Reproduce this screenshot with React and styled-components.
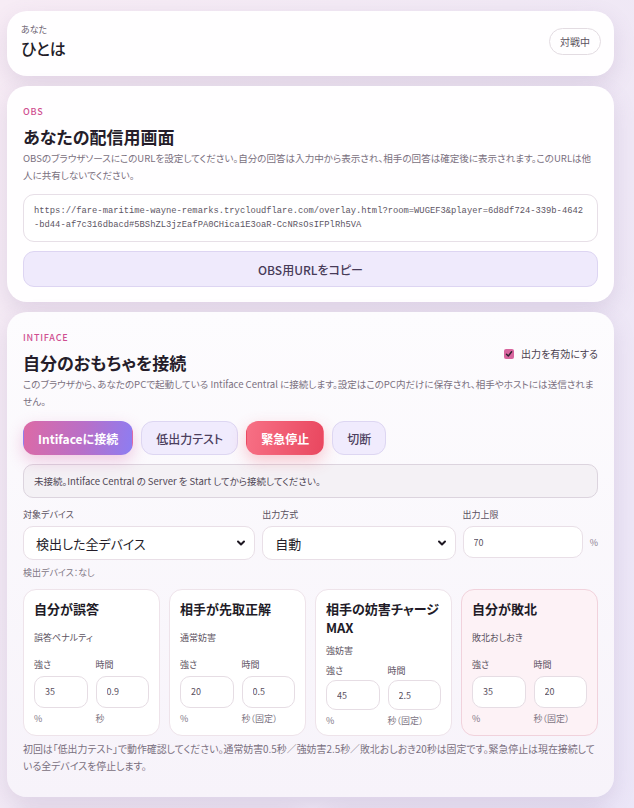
import React from "react";
import styled, { createGlobalStyle, css } from "styled-components";

const GlobalStyle = createGlobalStyle`
    html, body {
        margin: 0;
        min-height: 100%;
    }
    body {
        background: linear-gradient(120deg, #f7ecf5 0%, #f1e9f5 45%, #ebe6f8 100%);
        font-family: "Noto Sans CJK JP", "Noto Sans", sans-serif;
        font-feature-settings: "palt";
        color: #2b2331;
    }
`;

const Page = styled.main`
    display: flex;
    flex-direction: column;
    gap: 10px;
    padding: 11px 20px 0 7px;
`;

const Card = styled.section`
    background: ${function (props) { return props.$soft ? "linear-gradient(180deg, #fdfcfe 0%, #f7f3fa 100%)" : "#fffeff"; }};
    border-radius: 20px;
    box-shadow: 0 8px 22px rgba(120, 84, 140, 0.16);
    padding: 19px 16px 15px;
`;

const PlayerCard = styled(Card)`
    display: flex;
    align-items: center;
    justify-content: space-between;
    padding: 12px 13px 16px 14px;
`;

const PlayerLabel = styled.div`
    font-size: 9px;
    line-height: 14px;
    color: #6b6270;
`;

const PlayerName = styled.div`
    font-size: 16px;
    line-height: 23px;
    font-weight: 500;
    color: #231c28;
`;

const Badge = styled.span`
    display: inline-flex;
    align-items: center;
    height: 27px;
    box-sizing: border-box;
    padding: 0 10px;
    border: 1px solid #e3dce2;
    border-radius: 999px;
    font-size: 10px;
    color: #5b5260;
`;

const Eyebrow = styled.div`
    font-size: 9px;
    line-height: 14px;
    letter-spacing: 0.8px;
    font-weight: 500;
    color: #cf4e90;
`;

const Heading = styled.h2`
    margin: 5px 0 0;
    font-size: 17px;
    line-height: 26px;
    font-weight: 600;
    color: #251d2a;
`;

const Note = styled.p`
    margin: 0;
    font-size: 9.55px;
    line-height: 17px;
    color: #7a7080;
`;

const UrlBox = styled.div`
    margin-top: 10px;
    padding: 9px 10px;
    border: 1px solid #e7dfe7;
    border-radius: 11px;
    background: #fff;
    font-family: "Liberation Mono", monospace;
    font-feature-settings: normal;
    font-size: 8.8px;
    line-height: 14px;
    color: #5d5664;
    word-break: break-all;
`;

const CopyButton = styled.button`
    display: block;
    width: 100%;
    height: 36px;
    margin-top: 9px;
    border: 1px solid #ddd5f2;
    border-radius: 11px;
    background: #efeafc;
    font: inherit;
    font-size: 12px;
    font-weight: 500;
    color: #473b58;
`;

const HeadRow = styled.div`
    display: flex;
    align-items: center;
    justify-content: space-between;
`;

const Toggle = styled.label`
    display: flex;
    align-items: center;
    gap: 7px;
    font-size: 10px;
    color: #4b4250;
`;

const CheckMark = styled.span`
    display: inline-flex;
    align-items: center;
    justify-content: center;
    width: 10px;
    height: 10px;
    border-radius: 2px;
    background: #d7649d;
`;

const ActionRow = styled.div`
    display: flex;
    gap: 8px;
    margin-top: 11px;
`;

const variants = {
    primary: css`
        background: linear-gradient(100deg, #dc6aa6 0%, #b86fc8 55%, #8d7df2 100%);
        color: #fff;
        border-color: transparent;
        box-shadow: 0 6px 16px rgba(214, 104, 170, 0.32);
    `,
    danger: css`
        background: linear-gradient(100deg, #f77085 0%, #e9475f 100%);
        color: #fff;
        border-color: transparent;
        box-shadow: 0 6px 16px rgba(238, 82, 104, 0.3);
    `,
    soft: css`
        background: #f0ebfd;
        color: #4c405e;
        border-color: #ddd6f2;
    `,
};

const ActionButton = styled.button`
    height: 34px;
    padding: 0 14px;
    border: 1px solid;
    border-radius: 12px;
    font: inherit;
    font-size: 12px;
    font-weight: ${function (props) { return props.$variant === "soft" ? 500 : 700; }};
    ${function (props) { return variants[props.$variant]; }}
`;

const StatusBox = styled.div`
    margin-top: 9px;
    padding: 0 10px;
    height: 32px;
    display: flex;
    align-items: center;
    border: 1px solid #dcd4de;
    border-radius: 10px;
    background: #f4f1f5;
    font-size: 9.5px;
    color: #4f4654;
`;

const Controls = styled.div`
    display: grid;
    grid-template-columns: 1.2fr 1fr 0.7fr;
    gap: 7px;
    margin-top: 10px;
`;

const Field = styled.div`
    display: flex;
    flex-direction: column;
    gap: 4px;
`;

const FieldLabel = styled.span`
    font-size: 9px;
    line-height: 14px;
    color: #5a5160;
`;

const SelectBox = styled.div`
    display: flex;
    align-items: center;
    justify-content: space-between;
    height: 32px;
    padding: 0 8px 0 12px;
    border: 1px solid #e9dfe7;
    border-radius: 10px;
    background: #fff;
    font-size: 13px;
    color: #241d29;
`;

const LimitRow = styled.div`
    display: flex;
    align-items: center;
    gap: 7px;
`;

const NumberBox = styled.input`
    width: 100%;
    min-width: 0;
    height: 32px;
    box-sizing: border-box;
    padding: 0 10px;
    border: 1px solid #e9dfe7;
    border-radius: 10px;
    background: #fff;
    font: inherit;
    font-size: 9px;
    color: #5a5160;
    outline: none;
`;

const Unit = styled.span`
    font-size: 9px;
    color: #8a8190;
`;

const Detected = styled.div`
    margin-top: 6px;
    font-size: 9px;
    line-height: 14px;
    color: #7f7685;
`;

const EventGrid = styled.div`
    display: grid;
    grid-template-columns: repeat(4, 1fr);
    gap: 9px;
    margin-top: 9px;
`;

const EventCard = styled.div`
    display: grid;
    row-gap: 6px;
    padding: 9px 10px 7px;
    border: 1px solid ${function (props) { return props.$danger ? "#f1d2dc" : "#eee3ea"; }};
    border-radius: 13px;
    background: ${function (props) { return props.$danger ? "#fdf2f6" : "#fff"; }};
`;

const EventTitle = styled.div`
    font-size: 13px;
    line-height: 19px;
    font-weight: 600;
    color: #221b27;
`;

const EventSub = styled.div`
    font-size: 9px;
    line-height: 15px;
    color: #5c5361;
`;

const ParamGrid = styled.div`
    display: grid;
    grid-template-columns: 1fr 1fr;
    column-gap: 8px;
`;

const Param = styled.div`
    display: grid;
    row-gap: 2px;
`;

const ParamInput = styled.input`
    width: 100%;
    min-width: 0;
    min-height: 30px;
    box-sizing: border-box;
    padding: 0 10px;
    border: 1px solid #e6dde4;
    border-radius: 10px;
    background: #fff;
    font: inherit;
    font-size: 9px;
    color: #5a5160;
    outline: none;
`;

const ParamUnit = styled.span`
    margin-top: 2px;
    font-size: 9px;
    line-height: 14px;
    color: #7d7483;
`;

const Footnote = styled.p`
    margin: 4px 0 0;
    font-size: 9.92px;
    line-height: 17px;
    color: #7a7080;
`;

const IntifaceCard = styled(Card)`
    padding-bottom: 23px;
`;

const BottomRow = styled.div`
    display: grid;
    grid-template-columns: 1fr 1fr;
    gap: 18px;
    margin: 1px 3px 0 7px;
`;

const StubCard = styled.div`
    height: 60px;
    border-radius: 18px;
    border: 1px solid ${function (props) { return props.$tint; }};
    background: #fffdff;
    box-shadow: 0 6px 18px rgba(120, 84, 140, 0.14);
`;

const Chevron = function () {
    return (
        <svg width="10" height="10" viewBox="0 0 10 10" aria-hidden="true">
            <polyline points="2,3.5 5,6.5 8,3.5" fill="none" stroke="#1e1822" strokeWidth="2" strokeLinecap="round" strokeLinejoin="round" />
        </svg>
    );
};

const events = [
    { title: "自分が誤答", sub: "誤答ペナルティ", power: "35", time: "0.9", timeUnit: "秒" },
    { title: "相手が先取正解", sub: "通常妨害", power: "20", time: "0.5", timeUnit: "秒（固定）" },
    { title: "相手の妨害チャージMAX", sub: "強妨害", power: "45", time: "2.5", timeUnit: "秒（固定）" },
    { title: "自分が敗北", sub: "敗北おしおき", power: "35", time: "20", timeUnit: "秒（固定）", danger: true },
];

const overlayUrl = "https://fare-maritime-wayne-remarks.trycloudflare.com/overlay.html?room=WUGEF3&player=6d8df724-339b-4642-bd44-af7c316dbacd#5BShZL3jzEafPA0CHica1E3oaR-CcNRsOsIFPlRh5VA";

const App = function () {
    return (
        <>
            <GlobalStyle />
            <Page>
                <PlayerCard>
                    <div>
                        <PlayerLabel>あなた</PlayerLabel>
                        <PlayerName>ひとは</PlayerName>
                    </div>
                    <Badge>対戦中</Badge>
                </PlayerCard>

                <Card>
                    <Eyebrow>OBS</Eyebrow>
                    <Heading>あなたの配信用画面</Heading>
                    <Note>OBSのブラウザソースにこのURLを設定してください。自分の回答は入力中から表示され、相手の回答は確定後に表示されます。このURLは他人に共有しないでください。</Note>
                    <UrlBox>{overlayUrl}</UrlBox>
                    <CopyButton>OBS用URLをコピー</CopyButton>
                </Card>

                <IntifaceCard $soft>
                    <HeadRow>
                        <div>
                            <Eyebrow>INTIFACE</Eyebrow>
                            <Heading>自分のおもちゃを接続</Heading>
                        </div>
                        <Toggle>
                            <CheckMark>
                                <svg width="8" height="8" viewBox="0 0 8 8" aria-hidden="true">
                                    <polyline points="1.5,4.2 3.3,6 6.6,1.8" fill="none" stroke="#2e2230" strokeWidth="1.4" strokeLinecap="round" strokeLinejoin="round" />
                                </svg>
                            </CheckMark>
                            出力を有効にする
                        </Toggle>
                    </HeadRow>
                    <Note>このブラウザから、あなたのPCで起動している Intiface Central に接続します。設定はこのPC内だけに保存され、相手やホストには送信されません。</Note>

                    <ActionRow>
                        <ActionButton $variant="primary">Intifaceに接続</ActionButton>
                        <ActionButton $variant="soft">低出力テスト</ActionButton>
                        <ActionButton $variant="danger">緊急停止</ActionButton>
                        <ActionButton $variant="soft">切断</ActionButton>
                    </ActionRow>

                    <StatusBox>未接続。Intiface Central の Server を Start してから接続してください。</StatusBox>

                    <Controls>
                        <Field>
                            <FieldLabel>対象デバイス</FieldLabel>
                            <SelectBox>検出した全デバイス<Chevron /></SelectBox>
                        </Field>
                        <Field>
                            <FieldLabel>出力方式</FieldLabel>
                            <SelectBox>自動<Chevron /></SelectBox>
                        </Field>
                        <Field>
                            <FieldLabel>出力上限</FieldLabel>
                            <LimitRow>
                                <NumberBox readOnly value="70" />
                                <Unit>%</Unit>
                            </LimitRow>
                        </Field>
                    </Controls>

                    <Detected>検出デバイス：なし</Detected>

                    <EventGrid>
                        {events.map(function (ev) {
                            return (
                                <EventCard key={ev.title} $danger={ev.danger}>
                                    <EventTitle>{ev.title}</EventTitle>
                                    <EventSub>{ev.sub}</EventSub>
                                    <ParamGrid>
                                        <Param>
                                            <FieldLabel>強さ</FieldLabel>
                                            <ParamInput readOnly value={ev.power} />
                                            <ParamUnit>%</ParamUnit>
                                        </Param>
                                        <Param>
                                            <FieldLabel>時間</FieldLabel>
                                            <ParamInput readOnly value={ev.time} />
                                            <ParamUnit>{ev.timeUnit}</ParamUnit>
                                        </Param>
                                    </ParamGrid>
                                </EventCard>
                            );
                        })}
                    </EventGrid>

                    <Footnote>初回は「低出力テスト」で動作確認してください。通常妨害0.5秒／強妨害2.5秒／敗北おしおき20秒は固定です。緊急停止は現在接続している全デバイスを停止します。</Footnote>
                </IntifaceCard>

                <BottomRow>
                    <StubCard $tint="#f3dbe5" />
                    <StubCard $tint="#ece4f2" />
                </BottomRow>
            </Page>
        </>
    );
};

export default App;
